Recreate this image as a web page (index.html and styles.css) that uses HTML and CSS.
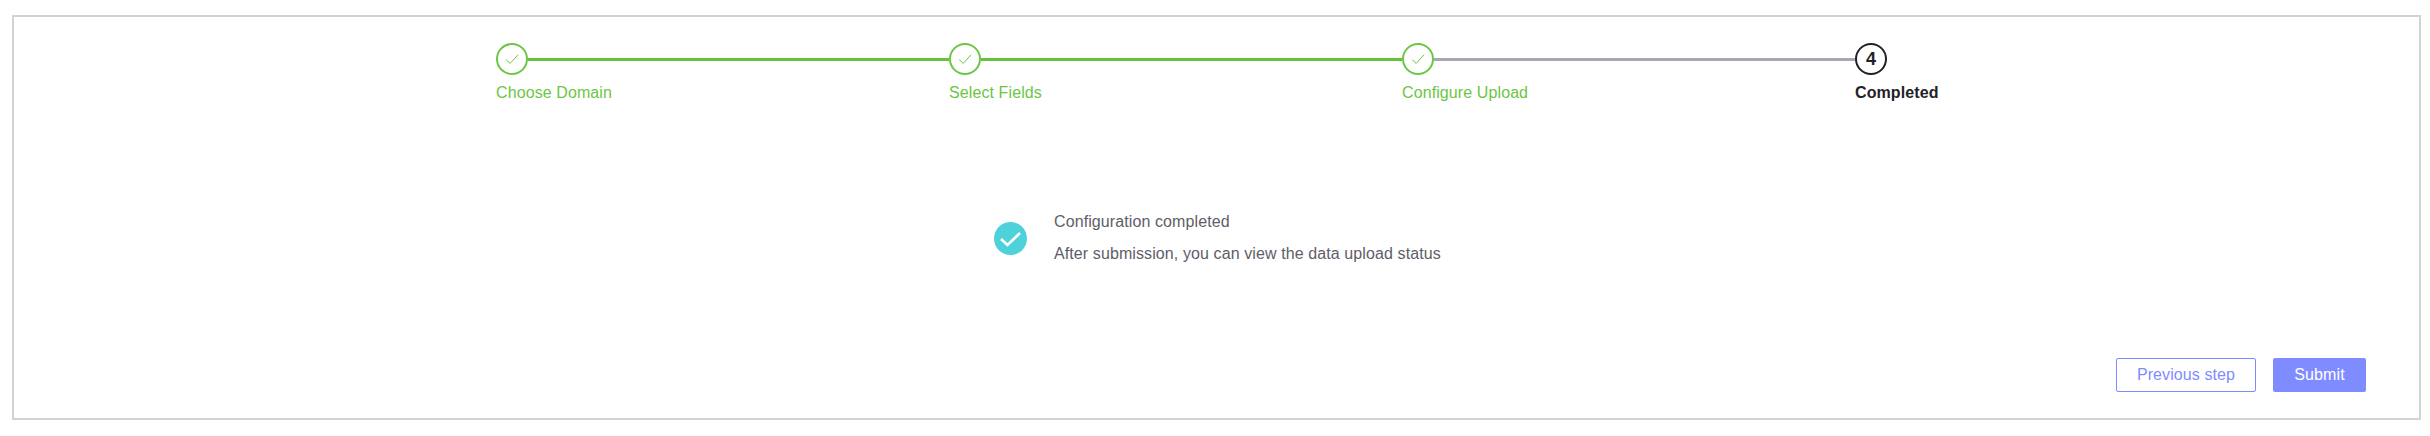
FILE: index.html
```html
<!DOCTYPE html>
<html lang="en">
<head>
<meta charset="utf-8">
<title>Upload</title>
<link rel="stylesheet" href="styles.css">
</head>
<body>
<main class="panel">
  <ol class="steps">
    <li class="step done">
      <div class="head"><span class="dot"><svg viewBox="0 0 16 16" class="tick"><path d="M2.2 8.6 6.2 12.4 14 3.8"/></svg></span><span class="line"></span></div>
      <div class="label">Choose Domain</div>
    </li>
    <li class="step done">
      <div class="head"><span class="dot"><svg viewBox="0 0 16 16" class="tick"><path d="M2.2 8.6 6.2 12.4 14 3.8"/></svg></span><span class="line"></span></div>
      <div class="label">Select Fields</div>
    </li>
    <li class="step done rest">
      <div class="head"><span class="dot"><svg viewBox="0 0 16 16" class="tick"><path d="M2.2 8.6 6.2 12.4 14 3.8"/></svg></span><span class="line"></span></div>
      <div class="label">Configure Upload</div>
    </li>
    <li class="step current">
      <div class="head"><span class="dot">4</span></div>
      <div class="label">Completed</div>
    </li>
  </ol>
  <section class="message">
    <svg class="ok" viewBox="0 0 33 33"><circle cx="16.5" cy="16.5" r="16.5"/><path d="M7 17 13.5 23 26 11"/></svg>
    <div class="texts">
      <p>Configuration completed</p>
      <p>After submission, you can view the data upload status</p>
    </div>
  </section>
  <footer class="actions">
    <button class="btn ghost" type="button">Previous step</button>
    <button class="btn primary" type="button">Submit</button>
  </footer>
</main>
</body>
</html>
```

FILE: styles.css
```css
* { box-sizing: border-box; }
html, body { margin: 0; padding: 0; background: #fff; }
body {
  width: 2430px;
  height: 436px;
  padding: 15px 9px 16px 12px;
  font-family: "Liberation Sans", Arial, sans-serif;
  font-size: 16px;
  letter-spacing: 0.1px;
}
.panel {
  height: 405px;
  border: 2px solid #d2d2d2;
  padding: 26px 53px 26px 482px;
  display: flex;
  flex-direction: column;
}
.steps {
  list-style: none;
  margin: 0;
  padding: 0;
  display: flex;
}
.step { width: 453px; flex: none; }
.step.current { width: 90px; }
.head { display: flex; align-items: center; height: 32px; }
.dot {
  width: 32px;
  height: 32px;
  flex: none;
  border: 2px solid #6cc644;
  border-radius: 50%;
  display: flex;
  align-items: center;
  justify-content: center;
}
.tick { width: 16px; height: 16px; fill: none; stroke: #6cc644; stroke-width: 1; }
.line { flex: 1; height: 3px; background: #67c23a; }
.rest .line { background: #a6a9b4; }
.label { margin-top: 8px; line-height: 20px; color: #6cc644; white-space: nowrap; }
.current .dot { border-color: #1f2329; color: #1f2329; font-weight: 700; font-size: 18px; }
.current .label { color: #1f2329; font-weight: 700; }
.message {
  margin-top: 109px;
  margin-left: 498px;
  display: flex;
  align-items: center;
  gap: 27px;
  color: #5e5e68;
}
.ok { width: 33px; height: 33px; flex: none; }
.ok circle { fill: #4dd2d9; }
.ok path { fill: none; stroke: #fff; stroke-width: 2.6; }
.texts p { margin: 0; line-height: 20px; }
.texts p + p { margin-top: 12px; }
.actions {
  margin-top: auto;
  display: flex;
  justify-content: flex-end;
  gap: 17px;
}
.btn {
  height: 34px;
  border-radius: 2px;
  font: inherit;
  letter-spacing: inherit;
  padding: 0;
}
.ghost { width: 140px; background: #fff; border: 1px solid #7f8cff; color: #7f8cff; }
.primary { width: 93px; background: #7f8cff; border: 0; color: #fff; }
```
